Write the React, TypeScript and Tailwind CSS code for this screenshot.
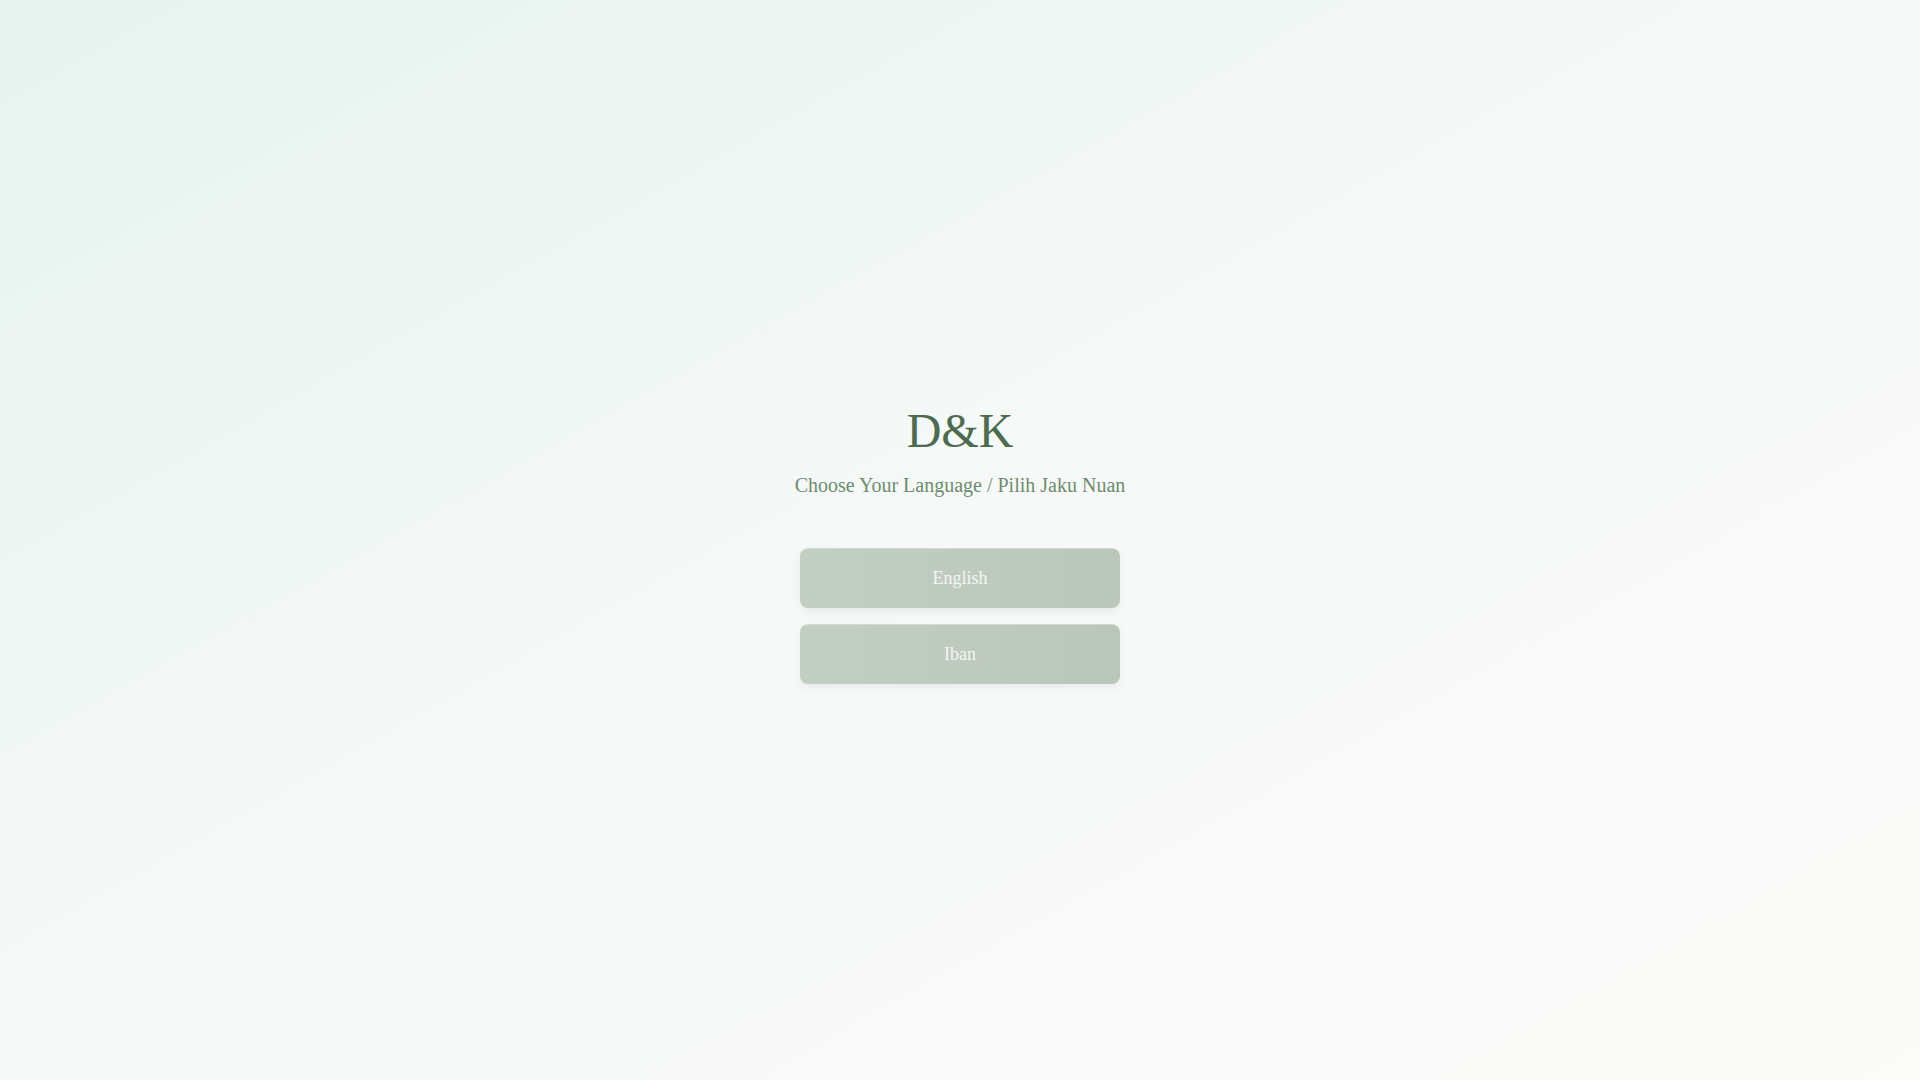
import React from "react";

export default function App() {
  return (
    <div
      className="min-h-screen w-full flex flex-col items-center justify-center bg-gradient-to-br from-[#e6f3ee] via-[#f6f9f8] to-[#fbfbf9] pt-[6px]"
      style={{ fontFamily: '"Liberation Serif", "Times New Roman", serif' }}
    >
      <h1 className="text-[48px] leading-[56px] text-[#4d6b4f] font-normal">D&amp;K</h1>
      <p className="mt-3 text-[20px] leading-[28px] text-[#6e8c6f]">
        Choose Your Language / Pilih Jaku Nuan
      </p>
      <div className="mt-[49px] flex flex-col gap-4 w-[320px]">
        <button className="h-[60px] w-full rounded-lg bg-gradient-to-r from-[#c3cfc3] to-[#bbc6ba] text-[18px] text-[#f4f6f2] shadow-[0_4px_10px_rgba(0,0,0,0.06)] border-t border-[#d2dbd2]">
          English
        </button>
        <button className="h-[60px] w-full rounded-lg bg-gradient-to-r from-[#c3cfc3] to-[#bbc6ba] text-[18px] text-[#f4f6f2] shadow-[0_4px_10px_rgba(0,0,0,0.06)] border-t border-[#d2dbd2]">
          Iban
        </button>
      </div>
    </div>
  );
}
